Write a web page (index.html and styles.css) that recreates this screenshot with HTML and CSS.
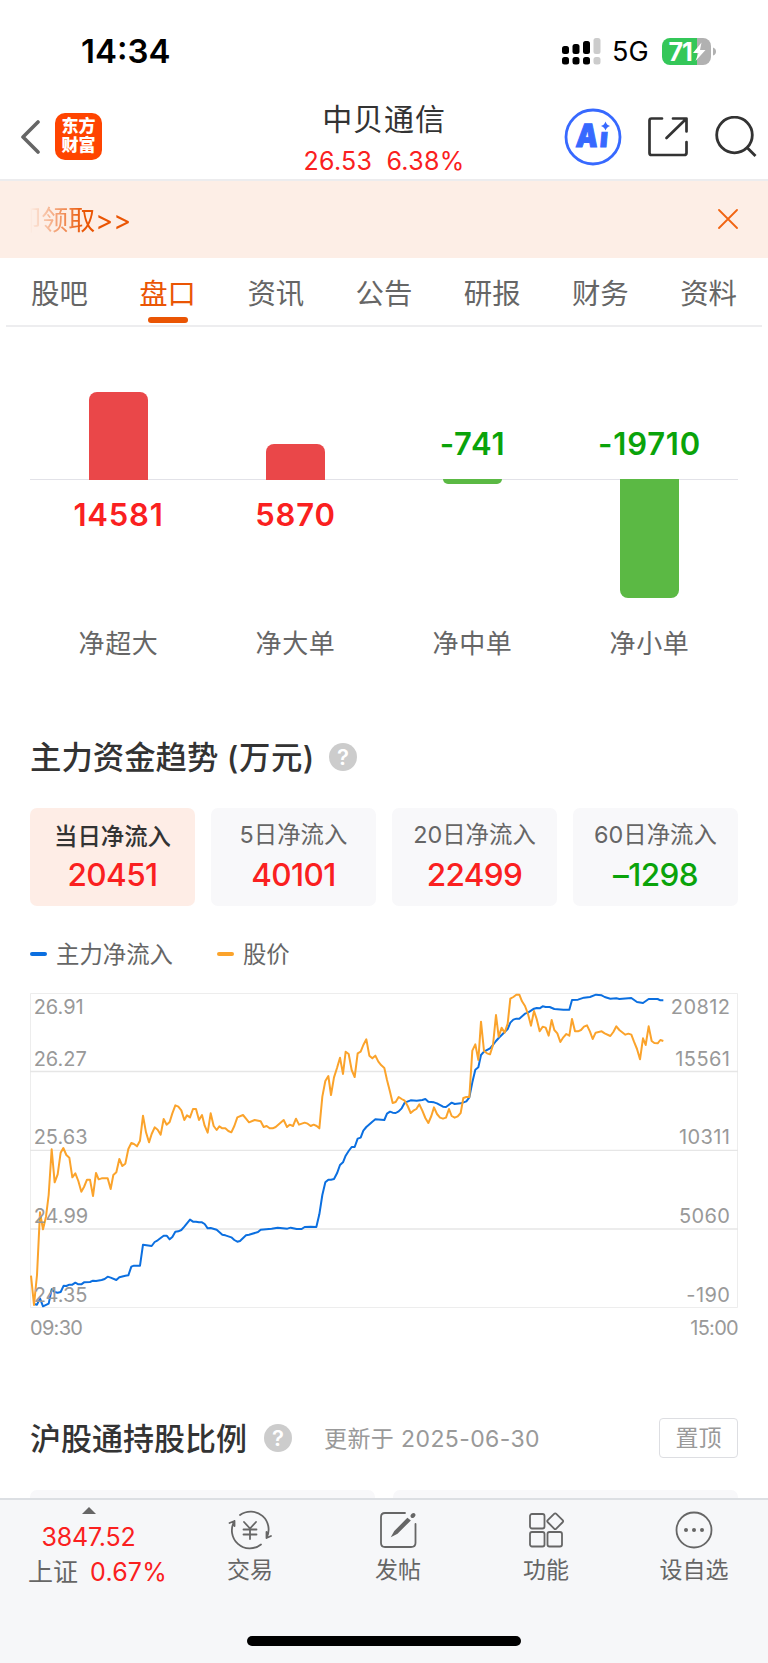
FILE: index.html
```html
<!DOCTYPE html>
<html lang="zh-CN">
<head>
  <meta charset="UTF-8">
  <meta name="viewport" content="width=device-width, initial-scale=1.0">
  <title>中贝通信</title>
  <link rel="stylesheet" href="styles.css">
</head>
<body>

  <div class="status-bar">
    <span class="time">14:34</span>
    <div class="status-right">
      <svg class="signal" width="40" height="28" viewBox="0 0 40 28">
        <g fill="#000">
          <rect x="0" y="9" width="7" height="8" rx="2.5"/><rect x="0" y="20" width="7" height="7.5" rx="2.5"/>
          <rect x="10.5" y="7" width="7" height="10" rx="2.5"/><rect x="10.5" y="20" width="7" height="7.5" rx="2.5"/>
          <rect x="21" y="4" width="7" height="13" rx="2.5"/><rect x="21" y="20" width="7" height="7.5" rx="2.5"/>
        </g>
        <g fill="#ccc">
          <rect x="31.5" y="1" width="7" height="16" rx="2.5"/><rect x="31.5" y="20" width="7" height="7.5" rx="2.5"/>
        </g>
      </svg>
      <span class="network">5G</span>
      <svg class="battery" width="54" height="27" viewBox="0 0 54 27">
        <path d="M8 0H35V27H8A8 8 0 0 1 0 19V8A8 8 0 0 1 8 0Z" fill="#34c759"/>
        <path d="M35 0H41A8 8 0 0 1 49 8V19A8 8 0 0 1 41 27H35Z" fill="#b1b1b1"/>
        <path d="M51 9.5Q54 10.5 54 13.5T51 17.5Z" fill="#b1b1b1"/>
        <text class="battery-text" x="6.5" y="22.5">71</text>
        <path d="M39.5 4.5L31 15H36.5L33.5 23L43.5 12H38Z" fill="#fff"/>
      </svg>
    </div>
  </div>

  <header class="header">
    <div class="header-left">
      <svg width="20" height="36" viewBox="0 0 20 36" fill="none" stroke="#666" stroke-width="3.6" stroke-linecap="round" stroke-linejoin="round">
        <path d="M17 3L2 18L17 33"/>
      </svg>
      <div class="logo"><span>东方</span><span>财富</span></div>
    </div>
    <div class="header-title">
      <h1>中贝通信</h1>
      <p><span>26.53</span><span>6.38%</span></p>
    </div>
    <div class="header-right">
      <svg width="58" height="58" viewBox="0 0 58 58">
        <circle cx="29" cy="29" r="27" fill="none" stroke="#3769ff" stroke-width="2.8"/>
        <g transform="translate(3.6 0) skewX(-5)">
          <text class="ai-text" x="11" y="39.5" textLength="22" lengthAdjust="spacingAndGlyphs">A</text>
          <text class="ai-text ai-text-i" x="35" y="39.5">ı</text>
        </g>
        <path d="M41.5 13.5Q42.5 17 46 18Q42.5 19 41.5 22.5Q40.5 19 37 18Q40.5 17 41.5 13.5Z" fill="#3769ff"/>
      </svg>
      <svg width="42" height="42" viewBox="0 0 42 42" fill="none" stroke="#333" stroke-width="2.7" stroke-linecap="round" stroke-linejoin="round">
        <path d="M15 2.5H4.5Q2.5 2.5 2.5 4.5V37Q2.5 39 4.5 39H37Q39.5 39 39.5 37V26"/>
        <path d="M26 2.5H39.5V15.5M38.5 3.5L19.5 22"/>
      </svg>
      <svg width="42" height="42" viewBox="0 0 42 42" fill="none" stroke="#333" stroke-width="2.8">
        <circle cx="19.5" cy="19" r="17.8"/>
        <path d="M32 31.5L40.5 40"/>
      </svg>
    </div>
  </header>

  <div class="notice">
    <div class="notice-text"><span>即领取&gt;&gt;</span></div>
    <svg width="20" height="20" viewBox="0 0 20 20" stroke="#f16412" stroke-width="1.8" stroke-linecap="round">
      <path d="M1 1L19 19M19 1L1 19"/>
    </svg>
  </div>

  <nav class="tabs">
    <a>股吧</a>
    <a class="active">盘口</a>
    <a>资讯</a>
    <a>公告</a>
    <a>研报</a>
    <a>财务</a>
    <a>资料</a>
  </nav>

  <section class="orders">
    <div class="order up">
      <div class="above"><div class="bar" style="height: 88px"></div></div>
      <div class="below"><b>14581</b></div>
      <p>净超大</p>
    </div>
    <div class="order up">
      <div class="above"><div class="bar" style="height: 36px"></div></div>
      <div class="below"><b>5870</b></div>
      <p>净大单</p>
    </div>
    <div class="order down">
      <div class="above"><b>-741</b></div>
      <div class="below"><div class="bar" style="height: 5px"></div></div>
      <p>净中单</p>
    </div>
    <div class="order down">
      <div class="above"><b>-19710</b></div>
      <div class="below"><div class="bar" style="height: 119px"></div></div>
      <p>净小单</p>
    </div>
  </section>

  <section class="trend">
    <div class="section-title">
      <h2>主力资金趋势 <span class="unit">(万元)</span></h2>
      <i class="help">?</i>
    </div>

    <div class="cards">
      <div class="card card-active"><span>当日净流入</span><b class="red">20451</b></div>
      <div class="card"><span>5日净流入</span><b class="red">40101</b></div>
      <div class="card"><span>20日净流入</span><b class="red">22499</b></div>
      <div class="card"><span>60日净流入</span><b class="green">–1298</b></div>
    </div>

    <div class="legend">
      <span class="legend-main">主力净流入</span>
      <span class="legend-price">股价</span>
    </div>

    <svg class="chart" viewBox="30 39 2124 945">
      <!-- grid -->
      <g class="grid">
        <path class="frame" d="M31.5 40.5H2152.5V982.5H31.5Z"/>
        <path d="M30 274.5H2154M30 511H2154M30 747H2154"/>
      </g>

      <polyline class="line line-main" points="
        42,972 51,974 60,955 69,979 86,971 95,928 104,936 113,938 122,936 131,917 139,918 148,914 157,914 166,908 175,913 184,913 192,907 210,906 219,902 228,903
        245,900 254,897 263,890 272,893 289,900 298,892 316,887 325,886 334,860 342,857 360,857 369,794 395,798 404,786 413,781 431,767 440,767 449,778 457,771
        466,755 475,754 484,750 493,740 510,719 519,725 528,725 537,727 546,727 554,732 563,745 572,744 590,749 607,764 616,766 634,772 643,780 652,785 660,783
        678,766 687,764 714,756 722,749 755,746 773,743 802,746 812,743 830,747 845,747 854,741 872,740 889,741 898,703 907,645 916,607 925,599 933,599 942,597
        951,580 960,555 969,547 977,527 986,513 995,501 1004,501 1013,476 1022,473 1030,452 1039,441 1057,425 1066,418 1093,420 1101,401 1110,395 1118,398
        1127,399 1136,394 1145,385 1154,368 1172,361 1190,362 1207,360 1216,357 1225,365 1242,367 1251,370 1269,380 1278,381 1287,374 1295,368 1304,372
        1322,370 1339,364 1348,352 1357,307 1366,269 1375,262 1383,225 1392,215 1410,205 1419,195 1428,183 1436,174 1454,156 1463,147 1471,128 1480,119
        1489,116 1498,116 1515,101 1524,98 1542,86 1550,84 1559,85 1568,79 1577,81 1589,81 1603,87 1630,89 1648,89 1656,60 1674,59 1692,53 1710,51 1728,44
        1745,46 1754,51 1771,56 1789,55 1798,57 1834,54 1851,66 1869,69 1886,57 1913,57 1921,61 1930,61"/>

      <polyline class="line line-price" points="
        33,887 42,975 51,885 60,697 69,748 78,710 86,645 95,508 104,607 113,583 122,518 130,504 139,525 148,533 157,592 166,580 175,603 184,635 192,621 201,599
        210,599 219,648 228,579 236,598 245,595 263,595 272,627 280,585 289,577 298,537 307,558 316,551 325,507 334,489 342,492 351,499 360,482 369,407 378,457
        387,487 395,462 404,442 413,449 422,464 431,417 440,434 449,426 457,400 466,376 475,380 484,391 493,420 501,406 510,412 519,387 528,387 537,420 546,405
        554,437 563,458 572,400 581,438 590,450 598,439 607,445 616,445 625,453 634,457 643,438 652,412 669,405 678,416 687,427 704,420 722,424 731,441 740,438
        749,445 758,445 767,441 791,420 801,441 809,434 819,438 828,416 837,434 854,428 863,431 872,438 881,434 890,438 898,445 907,350 916,303 925,288 933,345
        942,292 951,264 960,233 969,282 977,215 986,222 995,270 1004,291 1013,220 1022,215 1030,195 1039,178 1048,227 1057,235 1066,227 1075,245 1084,256
        1093,264 1101,300 1110,335 1118,369 1127,366 1136,351 1145,357 1154,362 1163,378 1172,399 1180,392 1189,387 1198,373 1207,392 1216,414 1225,429
        1234,408 1242,382 1251,402 1260,413 1269,416 1278,413 1287,387 1295,408 1304,413 1313,409 1322,399 1330,354 1339,351 1348,351 1357,212 1366,193
        1375,240 1383,125 1392,213 1401,220 1410,223 1419,195 1428,105 1436,170 1445,143 1454,158 1463,131 1471,56 1480,51 1489,44 1498,44 1506,64 1515,78
        1524,102 1533,137 1542,93 1550,117 1559,154 1568,140 1577,143 1586,167 1595,120 1603,150 1612,160 1621,186 1630,172 1639,162 1648,167 1656,117
        1665,154 1674,154 1683,150 1692,140 1701,136 1710,155 1718,177 1727,158 1745,154 1754,160 1771,168 1780,156 1789,139 1798,150 1816,164 1825,161
        1834,164 1842,185 1851,207 1860,238 1869,175 1877,195 1886,139 1895,183 1903,189 1913,190 1921,180 1930,183"/>

      <g class="axis">
        <text x="41" y="103">26.91</text>
        <text x="41" y="257">26.27</text>
        <text x="41" y="493">25.63</text>
        <text x="41" y="729">24.99</text>
        <text x="41" y="965">24.35</text>
      </g>
      <g class="axis axis-right">
        <text x="2131" y="103">20812</text>
        <text x="2131" y="257">15561</text>
        <text x="2131" y="493">10311</text>
        <text x="2131" y="729">5060</text>
        <text x="2131" y="965">-190</text>
      </g>
    </svg>
    <div class="chart-time"><span>09:30</span><span>15:00</span></div>
  </section>

  <section class="holding">
    <div class="section-title">
      <h2>沪股通持股比例</h2>
      <i class="help">?</i>
      <span class="updated">更新于 2025-06-30</span>
      <button class="pin">置顶</button>
    </div>
    <div class="holding-cards"><div></div><div></div></div>
  </section>

  <footer class="bottom-bar">
    <div class="index">
      <i class="triangle"></i>
      <span class="index-value">3847.52</span>
      <p>上证 <span>0.67%</span></p>
    </div>
    <div class="bottom-item">
      <svg width="44" height="40" viewBox="0 0 44 40" fill="none" stroke="#666" stroke-width="1.8" stroke-linecap="round" stroke-linejoin="round">
        <path d="M12 5A18 18 0 0 1 38.5 28L43 26M38.5 28V22M33 34.5A18 18 0 0 1 6.5 11L1.5 13M6.5 11V16"/>
        <path d="M16 12L22 18.5L28 12M22 18.5V29M15.5 19.5H28.5M15.5 24.5H28.5"/>
      </svg>
      <span>交易</span>
    </div>
    <div class="bottom-item">
      <svg width="44" height="40" viewBox="0 0 44 40" fill="none" stroke="#666" stroke-width="1.8" stroke-linecap="round">
        <path d="M29 3H9Q5 3 5 7V33Q5 37 9 37H35Q39.5 37 39.5 33V14"/>
        <path d="M31.5 9L19 21.5L17 25L21 23L33.5 10.5Z" fill="#666"/>
        <path d="M36.5 6L37.5 5" stroke-width="4"/>
      </svg>
      <span>发帖</span>
    </div>
    <div class="bottom-item">
      <svg width="44" height="40" viewBox="0 0 44 40" fill="none" stroke="#666" stroke-width="1.8" stroke-linejoin="round">
        <rect x="6" y="4" width="14.5" height="14.5" rx="2"/>
        <rect x="6" y="22" width="14.5" height="14.5" rx="2"/>
        <rect x="23.5" y="22" width="14.5" height="14.5" rx="2"/>
        <rect x="25.2" y="5.2" width="12" height="12" rx="1.5" transform="rotate(45 31.2 11.2)"/>
      </svg>
      <span>功能</span>
    </div>
    <div class="bottom-item">
      <svg width="44" height="40" viewBox="0 0 44 40">
        <circle cx="22" cy="20" r="17.5" fill="none" stroke="#666" stroke-width="1.8"/>
        <g fill="#666"><circle cx="14" cy="20" r="2"/><circle cx="22" cy="20" r="2"/><circle cx="30" cy="20" r="2"/></g>
      </svg>
      <span>设自选</span>
    </div>
    <div class="home-indicator"></div>
  </footer>

</body>
</html>
```

FILE: styles.css
```css
* {
  margin: 0;
  padding: 0;
  box-sizing: border-box;
}

body {
  display: flex;
  flex-direction: column;
  width: 768px;
  height: 1663px;
  overflow: hidden;
  background: #fff;
  color: #333;
  font-family: Inter, "Noto Sans CJK SC", sans-serif;
}

svg {
  display: block;
  flex: none;
}

i {
  font-style: normal;
}

.red {
  color: #fa2020;
}

.green {
  color: #0aa30a;
}

/* Status bar */
.status-bar {
  display: flex;
  align-items: center;
  justify-content: space-between;
  height: 100px;
  padding: 2px 52px 0 81px;
  color: #000;
}

.time {
  font-size: 33px;
  font-weight: 600;
}

.status-right {
  display: flex;
  align-items: center;
}

.network {
  width: 50px;
  margin-left: 11px;
  font-size: 27px;
  font-weight: 400;
}

.signal {
  margin-right: -1px;
}

.battery-text {
  fill: #fff;
  font-size: 25px;
  font-weight: 700;
  letter-spacing: -1px;
}

/* Header */
.header {
  display: grid;
  grid-template-columns: 204px 360px 204px;
  height: 81px;
  border-bottom: 2px solid #ececee;
}

.header-left {
  display: flex;
  align-items: center;
  gap: 14px;
  padding: 0 0 10px 21px;
}

.logo {
  display: flex;
  flex-direction: column;
  justify-content: center;
  width: 47px;
  height: 47px;
  margin-top: -1px;
  border-radius: 10px;
  background: #ff4400;
  color: #fff;
  font-size: 17px;
  font-weight: 900;
  line-height: 19px;
  text-align: center;
}

.header-title {
  text-align: center;
}

.header-title h1 {
  font-size: 30px;
  font-weight: 400;
  line-height: 38px;
  letter-spacing: 0.9px;
}

.header-title p {
  display: flex;
  justify-content: center;
  gap: 14px;
  padding-top: 1px;
  color: #fa2020;
  font-size: 25px;
  line-height: 44px;
  letter-spacing: 0.3px;
}

.header-right {
  display: flex;
  align-items: center;
  gap: 25px;
  padding-bottom: 10px;
}

.header-right svg:last-child {
  margin-left: 1px;
}

.ai-text {
  fill: #3769ff;
  stroke: #3769ff;
  stroke-width: 1px;
  font-size: 32px;
  font-weight: 900;
}

.ai-text-i {
  font-size: 27px;
}

/* Notice */
.notice {
  display: flex;
  align-items: center;
  justify-content: space-between;
  height: 77px;
  padding: 0 30px 2px;
  background: #fdeee6;
}

/* marquee, fades out on the left */
.notice-text {
  display: flex;
  justify-content: flex-end;
  width: 101px;
  overflow: hidden;
  color: #ea5504;
  font-size: 27px;
  white-space: nowrap;
  -webkit-mask-image: linear-gradient(to right, transparent, #000 54px);
  mask-image: linear-gradient(to right, transparent, #000 54px);
}

/* Tabs */
.tabs {
  display: flex;
  justify-content: space-between;
  height: 69px;
  margin: 0 6px;
  padding: 0 25px;
  border-bottom: 2px solid #ededef;
  color: #666;
  font-size: 28.4px;
  line-height: 72px;
}

.tabs .active {
  position: relative;
  color: #ea5504;
}

.tabs .active::after {
  content: "";
  position: absolute;
  left: 50%;
  bottom: 2px;
  width: 40px;
  height: 6px;
  margin-left: -20px;
  border-radius: 3px;
  background: #ea5504;
}

/* Net orders */
.orders {
  display: grid;
  grid-template-columns: repeat(4, 1fr);
  height: 391px;
  padding: 0 30px;
}

.order {
  text-align: center;
}

.order b {
  display: block;
  font-size: 31px;
  font-weight: 600;
  line-height: 36px;
  letter-spacing: 0.8px;
}

.order .bar {
  width: 59px;
  margin: 0 auto;
}

.above {
  display: flex;
  flex-direction: column;
  justify-content: flex-end;
  height: 153px;
  border-bottom: 1px solid #e2e2e8;
}

.below {
  height: 139px;
}

.up .bar {
  margin-bottom: -1px;
  border-radius: 8px 8px 0 0;
  background: #ea4749;
}

.up b {
  padding-top: 17px;
  color: #fa2020;
}

.down .bar {
  margin-top: -1px;
  border-radius: 0 0 8px 8px;
  background: #5bb944;
}

.down .below {
  display: flow-root;
}

.down b {
  padding-bottom: 17px;
  color: #0aa30a;
}

.order p {
  color: #666;
  font-size: 26px;
  line-height: 50px;
  letter-spacing: 0.7px;
}

/* Section title */
.section-title {
  display: flex;
  align-items: center;
  height: 40px;
}

.section-title h2 {
  padding-bottom: 4px;
  font-size: 31px;
  font-weight: 500;
  white-space: nowrap;
}

.unit {
  letter-spacing: 0.6px;
}

.help {
  width: 28px;
  height: 28px;
  margin-left: 17px;
  border-radius: 50%;
  background: #ccc;
  color: #fff;
  font-size: 22px;
  font-weight: 600;
  line-height: 28px;
  text-align: center;
}

/* Trend */
.trend {
  height: 644px;
  padding: 19px 30px 0;
}

.trend h2 {
  font-size: 31.4px;
}

.trend .help {
  margin-left: 14px;
}

.cards {
  display: grid;
  grid-template-columns: repeat(4, 1fr);
  gap: 16px;
  margin-top: 31px;
}

.card {
  display: flex;
  flex-direction: column;
  align-items: center;
  height: 98px;
  padding-top: 9px;
  border-radius: 7px;
  background: #f8f8fa;
}

.card span {
  color: #666;
  font-size: 23.4px;
  line-height: 36px;
}

.card b {
  margin-top: 3px;
  font-size: 31.5px;
  font-weight: 500;
  line-height: 38px;
  letter-spacing: -0.6px;
}

.card-active {
  background: #feede6;
}

.card-active span {
  padding-top: 2px;
  color: #333;
  font-weight: 500;
}

.card-active b {
  margin-top: 1px;
}

.legend {
  display: flex;
  gap: 44px;
  margin-top: 31px;
  color: #666;
  font-size: 23.4px;
  line-height: 36px;
}

.legend span {
  display: flex;
  align-items: center;
  gap: 9px;
}

.legend span::before {
  content: "";
  width: 17px;
  height: 4px;
  margin-top: -2px;
  border-radius: 2px;
}

.legend-main::before {
  background: #0b6fe0;
}

.legend-price::before {
  background: #fba32b;
}

.chart {
  width: 708px;
  height: 315px;
  margin-top: 20px;
}

.grid path {
  fill: none;
  stroke: #e6e6e6;
  stroke-width: 4;
}

.grid .frame {
  stroke: #ededed;
  stroke-width: 3;
}

.line {
  fill: none;
  stroke-width: 6;
  stroke-linejoin: round;
}

.line-main {
  stroke: #0b6fe0;
}

.line-price {
  stroke: #fba32b;
}

.axis {
  fill: #999;
  font-size: 60px;
}

.axis-right {
  letter-spacing: 1.2px;
  text-anchor: end;
}

.chart-time {
  display: flex;
  justify-content: space-between;
  color: #999;
  font-size: 20px;
  line-height: 41px;
  letter-spacing: -0.7px;
}

/* Holding */
.holding {
  height: 136px;
  padding: 56px 30px 0;
}

.updated {
  margin-left: 32px;
  padding-bottom: 2px;
  color: #999;
  font-size: 23px;
  letter-spacing: 0.4px;
}

.pin {
  width: 79px;
  height: 40px;
  margin-left: auto;
  border: 1px solid #dddee2;
  border-radius: 4px;
  background: #fff;
  color: #999;
  font: inherit;
  font-size: 23px;
  line-height: 36px;
}

.holding-cards {
  display: grid;
  grid-template-columns: 1fr 1fr;
  gap: 18px;
  margin-top: 32px;
}

.holding-cards div {
  height: 8px;
  border-radius: 7px 7px 0 0;
  background: #f8f8fa;
}

/* Bottom bar */
.bottom-bar {
  display: grid;
  grid-template-columns: 176px repeat(4, 148px);
  grid-template-rows: 136px 10px;
  flex: 1;
  border-top: 2px solid #dcdfe3;
  background: #f6f7f9;
  color: #666;
}

.index {
  display: flex;
  flex-direction: column;
  align-items: center;
  padding: 7px 0 0 1px;
  font-size: 25px;
}

.index span {
  color: #fa2020;
}

.index-value {
  margin-top: 5px;
  line-height: 36px;
  letter-spacing: -0.2px;
}

.index p {
  line-height: 34px;
  padding-left: 18px;
  white-space: nowrap;
}

.index p span {
  margin-left: 5px;
  letter-spacing: 0.2px;
}

.triangle {
  border: 7px solid transparent;
  border-top: 0;
  border-bottom-color: #666;
}

.bottom-item {
  display: flex;
  flex-direction: column;
  align-items: center;
  padding-top: 10px;
  font-size: 23px;
}

.bottom-item span {
  margin-top: 2px;
  line-height: 36px;
}

.home-indicator {
  grid-column: 1 / -1;
  justify-self: center;
  width: 274px;
  height: 10px;
  border-radius: 5px;
  background: #000;
}
```
